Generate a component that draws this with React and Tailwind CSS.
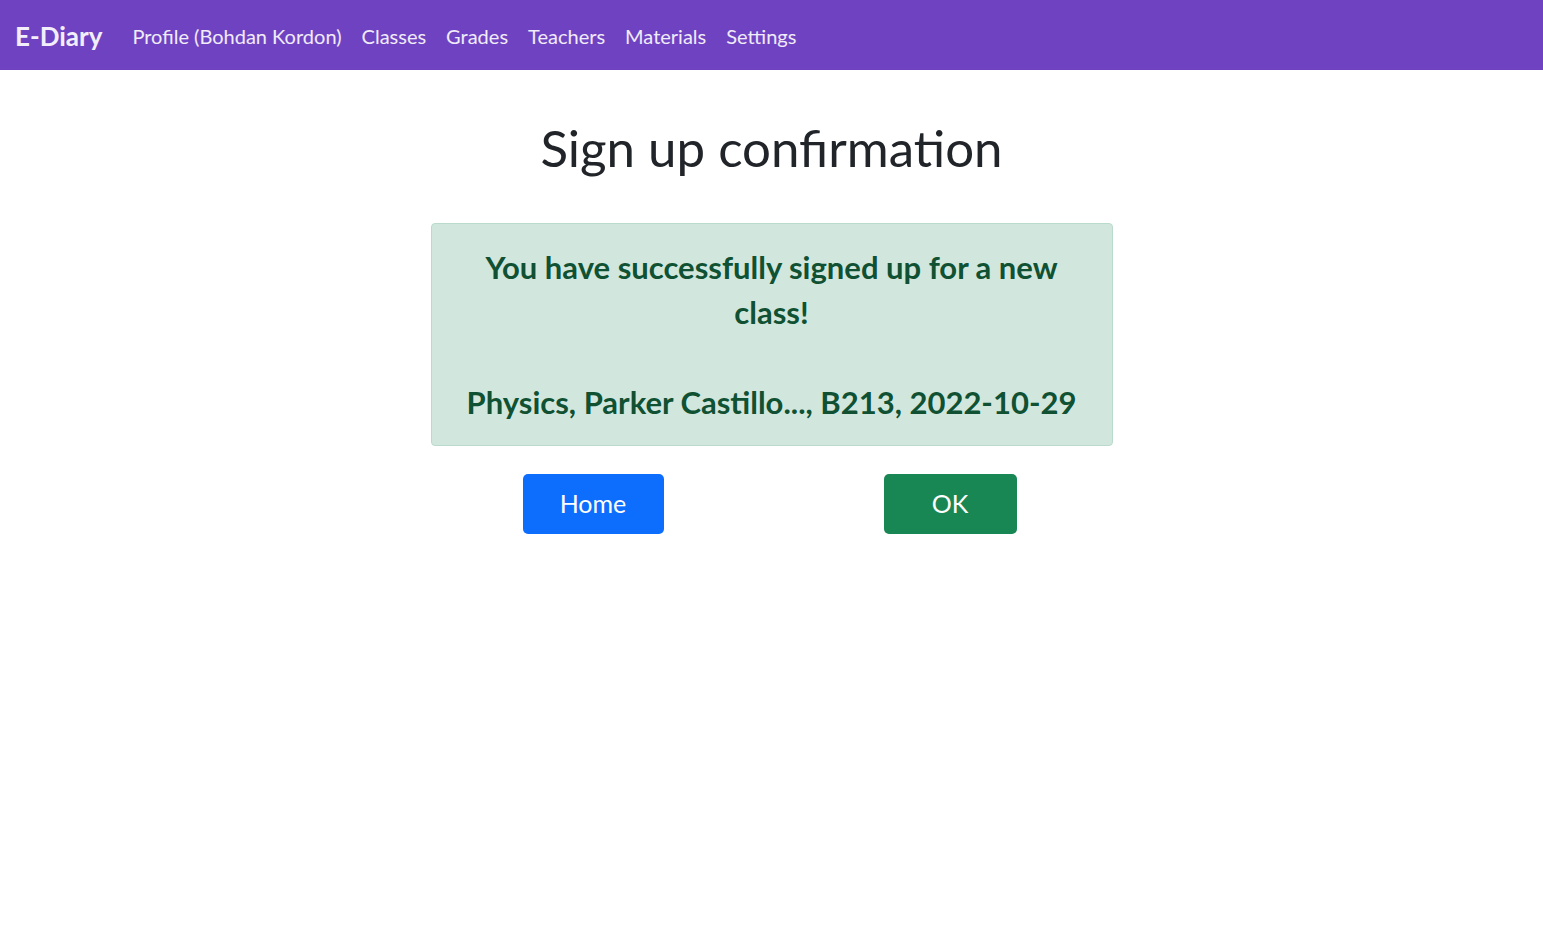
const navLinks = ['Profile (Bohdan Kordon)', 'Classes', 'Grades', 'Teachers', 'Materials', 'Settings'];

export default function App() {
  return (
    <div className="min-h-screen bg-white font-['Lato',sans-serif] text-[#212529]">
      {/* Top navbar */}
      <nav className="flex h-[70px] items-center bg-[#6f42c1] px-[15px] pt-[2px]">
        <span className="mr-[20px] text-[26px] font-bold text-[#f3eefb]">E-Diary</span>
        <div className="flex items-center">
          {navLinks.map((link) => (
            <a key={link} href="#" className="px-[10px] text-[20px] text-white/90">
              {link}
            </a>
          ))}
        </div>
      </nav>

      <main className="flex flex-col items-center">
        <h1 className="mt-[48px] text-[51px] leading-[60px] font-normal">Sign up confirmation</h1>

        {/* Confirmation alert */}
        <div className="mt-[45px] w-[682px] rounded-[4px] border border-[#badbcc] bg-[#d1e7dd] px-4 pt-[21px] pb-[20px] text-center text-[31px] leading-[45px] font-bold text-[#0f5132]">
          <p>You have successfully signed up for a new class!</p>
          <p>&nbsp;</p>
          <p>Physics, Parker Castillo..., B213, 2022-10-29</p>
        </div>

        <div className="mt-[28px] mr-[4px] flex w-[494px] justify-between">
          <button className="h-[60px] w-[141px] rounded-[5px] bg-[#0d6efd] text-[25px] text-white">Home</button>
          <button className="h-[60px] w-[133px] rounded-[5px] bg-[#198754] text-[25px] text-white">OK</button>
        </div>
      </main>
    </div>
  );
}
